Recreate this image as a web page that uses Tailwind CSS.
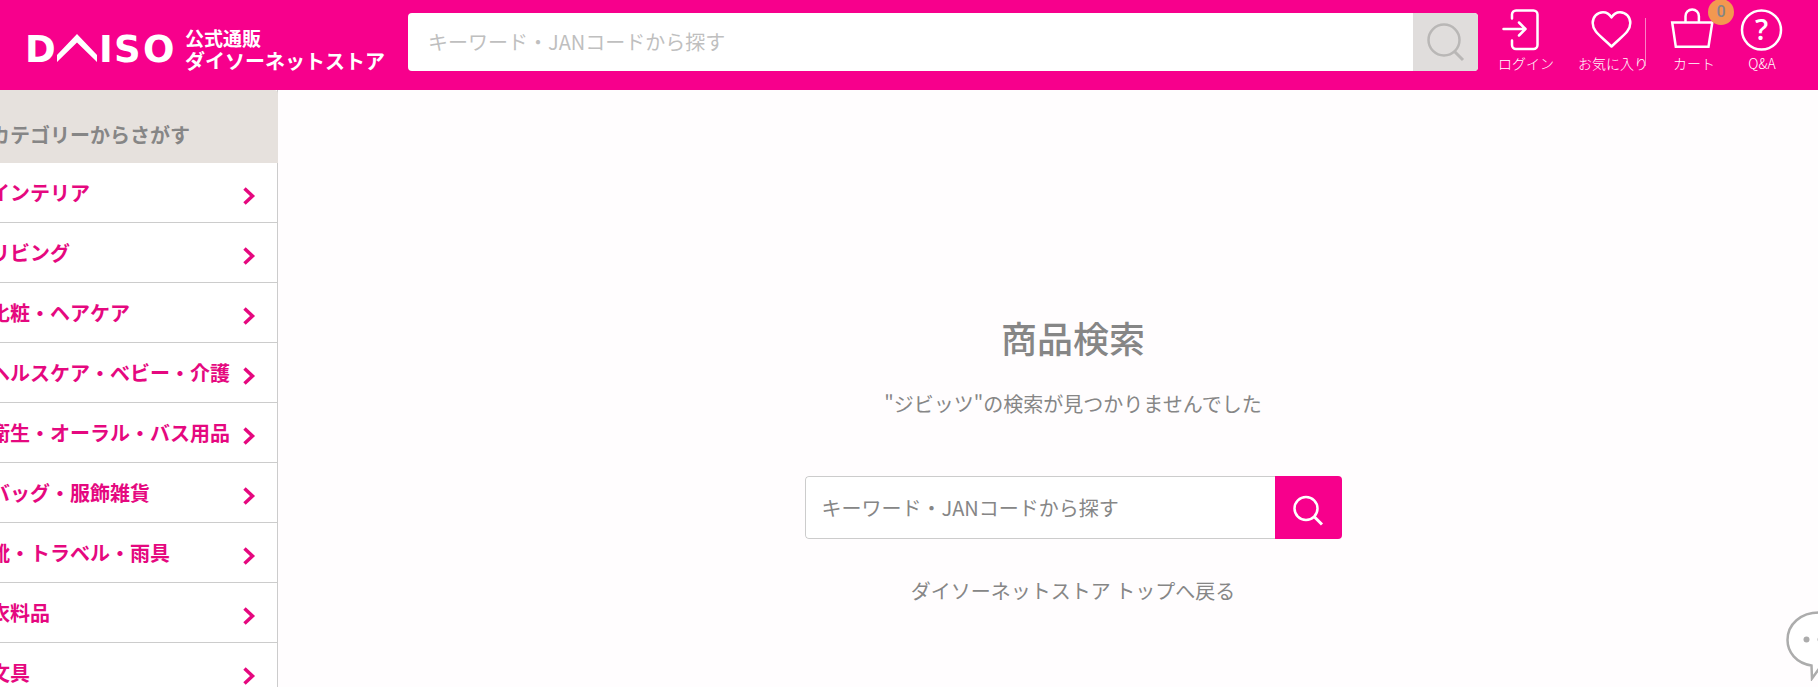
<!DOCTYPE html>
<html lang="ja">
<head>
  <meta charset="UTF-8">
  <meta name="viewport" content="width=device-width, initial-scale=1.0">
  <title>商品検索 | ダイソーネットストア</title>
  <script src="https://cdn.jsdelivr.net/npm/@tailwindcss/browser@4"></script>
</head>
<body class="flex h-screen flex-col overflow-hidden bg-[#fffdfe] font-['Noto_Sans_CJK_JP',sans-serif] text-[#868686]">
  <header class="flex h-[90px] shrink-0 items-start bg-[#f7008c] pl-7 pr-[34px] text-white">
    <a href="#" class="mt-[26px] flex w-[380px] shrink-0 items-start" aria-label="DAISO 公式通販 ダイソーネットストア">
      <svg class="mt-1 h-9 w-[157px] shrink-0 overflow-visible" viewBox="0 0 157 36" fill="#fff">
        <g class="font-['DejaVu_Sans',sans-serif] font-bold" font-size="37">
          <text x="-3" y="32">D</text>
          <text x="71" y="32">I</text>
          <text x="86" y="32">S</text>
          <text x="115" y="32">O</text>
        </g>
        <path d="M29 32v-7L49 4l20 21v7L49 12.500z"/>
      </svg>
      <span class="flex flex-col text-xl font-bold leading-[23px]">
        <span class="text-[19px]">公式通販</span>
        <span class="whitespace-nowrap">ダイソーネットストア</span>
      </span>
    </a>
    <!-- header search -->
    <form class="mt-[13px] flex h-[58px] min-w-0 flex-1 overflow-hidden rounded bg-white">
      <input type="text" aria-label="キーワード検索" placeholder="キーワード・JANコードから探す" class="min-w-0 flex-1 px-5 text-xl text-[#868686] outline-none placeholder:text-[#bfbfbf]">
      <button type="button" aria-label="検索" class="flex w-[65px] items-center justify-center bg-[#e0dddc]">
        <svg class="size-10" viewBox="0 0 40 40" fill="none" stroke="#b9b7b6" stroke-width="2.500">
          <circle cx="18" cy="18" r="15.500"/>
          <path d="M28.500 29.500l8.500 8.500" stroke-width="3"/>
        </svg>
      </button>
    </form>
    <nav class="ml-5 mt-2 flex gap-6 text-center text-sm font-light leading-5">
      <a href="#" class="flex w-14 flex-col items-center gap-px whitespace-nowrap">
        <svg class="h-11 w-14" viewBox="0 0 56 44" fill="none" stroke="#fff" stroke-width="2.500" stroke-linecap="round" stroke-linejoin="round">
          <path d="M14 10.500V6.500a4 4 0 0 1 4-4h17.500a4 4 0 0 1 4 4V37a4 4 0 0 1-4 4H18a4 4 0 0 1-4-4v-4.500"/>
          <path d="M5.500 21H27.500M21 14.500l6.500 6.500-6.500 6.500"/>
        </svg>
        ログイン
      </a>
      <a href="#" class="relative flex w-[70px] flex-col items-center gap-px whitespace-nowrap">
        <svg class="h-11 w-[70px]" viewBox="0 0 70 44" fill="none" stroke="#fff" stroke-width="2.500" stroke-linejoin="round">
          <path d="M33.500 9.500C31.500 6 28.500 4.200 25 4.200c-6 0-10.300 4.800-10.300 10.800 0 9 8.800 13.500 18.800 23.500 10-10 18.800-14.500 18.800-23.500 0-6-4.300-10.800-10.300-10.800-3.500 0-6.500 1.800-8.500 5.300z"/>
        </svg>
        お気に入り
        <span class="absolute right-0.5 top-2.5 h-12 w-px bg-white/50"></span>
      </a>
      <a href="#" class="relative flex w-11 flex-col items-center gap-px whitespace-nowrap">
        <svg class="h-11 w-11 overflow-visible" viewBox="0 0 44 44" fill="none" stroke="#fff" stroke-width="2.500">
          <path d="M.2 14.500H40.300L36.500 38.800H3.800z"/>
          <path d="M13.500 14V8.200a6.700 6.700 0 0 1 13.400 0V14"/>
        </svg>
        カート
        <span class="absolute -right-[18px] -top-[9px] flex size-[26px] items-center justify-center rounded-full bg-[#f39850] font-['Roboto',sans-serif] text-base font-medium text-[#868686]">0</span>
      </a>
      <a href="#" class="flex w-11 flex-col items-center gap-px whitespace-nowrap">
        <svg class="h-11 w-11" viewBox="0 0 44 44">
          <circle cx="21.500" cy="22" r="19.500" fill="none" stroke="#fff" stroke-width="2.500"/>
          <text x="21.500" y="32" text-anchor="middle" fill="#fff" font-size="29" class="font-['Open_Sans',sans-serif] font-semibold">?</text>
        </svg>
        Q&amp;A
      </a>
    </nav>
  </header>

  <div class="flex min-h-0 flex-1">
    <aside class="w-[278px] shrink-0 border-r border-[#ccc] bg-white">
      <h2 class="-mr-px flex h-[73px] items-center rounded-tr bg-[#e6e1dd] pt-4 text-xl font-bold"><span class="-ml-2.5 whitespace-nowrap">カテゴリーからさがす</span></h2>
      <ul class="text-xl font-bold text-[#e5087f]">
        <li><a href="#" class="-ml-2.5 flex h-[60px] items-center justify-between whitespace-nowrap border-b border-[#ccc] pr-5">インテリア<svg class="mt-1.5 h-5 w-4" viewBox="0 0 16 20" fill="none" stroke="currentColor" stroke-width="3.500"><path d="M3.500 2.500l8 7.500-8 7.500"/></svg></a></li>
        <li><a href="#" class="-ml-2.5 flex h-[60px] items-center justify-between whitespace-nowrap border-b border-[#ccc] pr-5">リビング<svg class="mt-1.5 h-5 w-4" viewBox="0 0 16 20" fill="none" stroke="currentColor" stroke-width="3.500"><path d="M3.500 2.500l8 7.500-8 7.500"/></svg></a></li>
        <li><a href="#" class="-ml-2.5 flex h-[60px] items-center justify-between whitespace-nowrap border-b border-[#ccc] pr-5">化粧・ヘアケア<svg class="mt-1.5 h-5 w-4" viewBox="0 0 16 20" fill="none" stroke="currentColor" stroke-width="3.500"><path d="M3.500 2.500l8 7.500-8 7.500"/></svg></a></li>
        <li><a href="#" class="-ml-2.5 flex h-[60px] items-center justify-between whitespace-nowrap border-b border-[#ccc] pr-5">ヘルスケア・ベビー・介護<svg class="mt-1.5 h-5 w-4 shrink-0" viewBox="0 0 16 20" fill="none" stroke="currentColor" stroke-width="3.500"><path d="M3.500 2.500l8 7.500-8 7.500"/></svg></a></li>
        <li><a href="#" class="-ml-2.5 flex h-[60px] items-center justify-between whitespace-nowrap border-b border-[#ccc] pr-5">衛生・オーラル・バス用品<svg class="mt-1.5 h-5 w-4 shrink-0" viewBox="0 0 16 20" fill="none" stroke="currentColor" stroke-width="3.500"><path d="M3.500 2.500l8 7.500-8 7.500"/></svg></a></li>
        <li><a href="#" class="-ml-2.5 flex h-[60px] items-center justify-between whitespace-nowrap border-b border-[#ccc] pr-5">バッグ・服飾雑貨<svg class="mt-1.5 h-5 w-4" viewBox="0 0 16 20" fill="none" stroke="currentColor" stroke-width="3.500"><path d="M3.500 2.500l8 7.500-8 7.500"/></svg></a></li>
        <li><a href="#" class="-ml-2.5 flex h-[60px] items-center justify-between whitespace-nowrap border-b border-[#ccc] pr-5">靴・トラベル・雨具<svg class="mt-1.5 h-5 w-4" viewBox="0 0 16 20" fill="none" stroke="currentColor" stroke-width="3.500"><path d="M3.500 2.500l8 7.500-8 7.500"/></svg></a></li>
        <li><a href="#" class="-ml-2.5 flex h-[60px] items-center justify-between whitespace-nowrap border-b border-[#ccc] pr-5">衣料品<svg class="mt-1.5 h-5 w-4" viewBox="0 0 16 20" fill="none" stroke="currentColor" stroke-width="3.500"><path d="M3.500 2.500l8 7.500-8 7.500"/></svg></a></li>
        <li><a href="#" class="-ml-2.5 flex h-[60px] items-center justify-between whitespace-nowrap border-b border-[#ccc] pr-5">文具<svg class="mt-1.5 h-5 w-4" viewBox="0 0 16 20" fill="none" stroke="currentColor" stroke-width="3.500"><path d="M3.500 2.500l8 7.500-8 7.500"/></svg></a></li>
      </ul>
    </aside>

    <main class="flex min-w-0 flex-1 flex-col items-center pl-[50px] pt-[222px] text-xl">
      <h1 class="text-4xl font-medium leading-[50px]">商品検索</h1>
      <p class="mt-[26px] leading-8">"ジビッツ"の検索が見つかりませんでした</p>
      <form class="mt-14 flex h-[63px] w-full max-w-[537px] overflow-hidden rounded-sm">
        <input type="text" aria-label="キーワード" placeholder="キーワード・JANコードから探す" class="min-w-0 flex-1 rounded-l-sm border border-r-0 border-[#ccc] bg-white px-4 text-[#868686] outline-none placeholder:text-[#868686]">
        <button type="button" aria-label="検索" class="flex w-[67px] items-center justify-center bg-[#f7008c] pt-1.5">
          <svg class="size-8" viewBox="0 0 32 32" fill="none" stroke="#fff" stroke-width="2.500">
            <circle cx="14" cy="13.500" r="11.500"/>
            <path d="M22 21.500l8 8" stroke-width="3"/>
          </svg>
        </button>
      </form>
      <a href="#" class="mt-9 leading-8">ダイソーネットストア トップへ戻る</a>
    </main>
  </div>

  <!-- chat launcher, hangs off the right edge -->
  <button type="button" aria-label="チャット" class="fixed -right-9 bottom-1.5">
    <svg class="h-[72px] w-[70px]" viewBox="0 0 70 72" fill="none" stroke="#acacac" stroke-width="2.500">
      <path fill="#fff" d="M27.500 56.500C12 54 3.500 43 3.500 31 3.500 15 17 3.500 35 3.500S66.500 15 66.500 31 53 57 37 57L28 69.500z"/>
      <g fill="#acacac" stroke="none"><circle cx="22.500" cy="30.500" r="3"/><circle cx="36.500" cy="30.500" r="3"/><circle cx="50.500" cy="30.500" r="3"/></g>
    </svg>
  </button>
</body>
</html>
